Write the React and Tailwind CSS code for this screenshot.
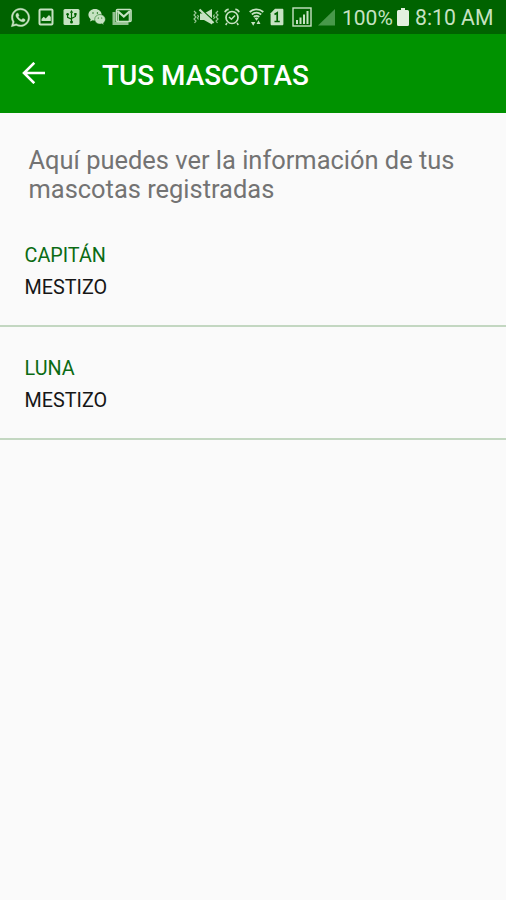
import React from "react";
import { FaWhatsapp } from "react-icons/fa";

function ImageIcon() {
  return (
    <svg className="ml-[7px] h-[18px] w-[16px]" viewBox="0 0 16 18" fill="none">
      <rect x="1.5" y="1.5" width="13" height="15" rx="1" stroke="currentColor" strokeWidth="2" />
      <path d="M3.5 13V11l2.2-2.2 2 1.7L11 7l1.8 2v4z" fill="currentColor" />
    </svg>
  );
}

function UsbIcon() {
  return (
    <svg className="ml-[9px] h-[18px] w-[17px]" viewBox="0 0 17 18" fill="none">
      <rect x="0.5" y="1" width="16" height="16" rx="1.5" fill="currentColor" />
      <g stroke="#006300" strokeWidth="1.2">
        <path d="M8.5 4.5V14M4.6 6.5v2.8l3.9 2M12.4 6.5v2l-3.9 2" />
      </g>
      <g fill="#006300">
        <path d="M8.5 2 6.8 4.8h3.4z" />
        <circle cx="4.6" cy="6.3" r="1.3" />
        <path d="M11.2 5h2.4v2.4h-2.4z" />
        <circle cx="8.5" cy="14" r="1.5" />
      </g>
    </svg>
  );
}

function ChatIcon() {
  return (
    <svg className="ml-[8px] h-[18px] w-[18px]" viewBox="0 0 18 18" fill="none">
      <path d="M7 1C3.200 1 .4 3.600.4 6.800c0 1.800 1 3.300 2.300 4.400L2 13.500l2.700-1.300c.7.200 1.500.3 2.300.3 3.800 0 6.700-2.600 6.700-5.700S10.800 1 7 1z" fill="currentColor" />
      <path d="M12 6.500c-3 0-5.300 2.200-5.300 4.800s2.300 4.800 5.300 4.800c.7 0 1.300-.1 1.900-.3l2.100 1.200-.6-2c1.300-.9 2-2.200 2-3.700 0-2.600-2.400-4.800-5.400-4.800z" fill="currentColor" stroke="#006300" strokeWidth=".5" />
      <g fill="#006300">
        <circle cx="5" cy="5" r=".7" />
        <circle cx="9.400" cy="5" r=".7" />
        <circle cx="10.300" cy="10" r=".6" />
        <circle cx="13.700" cy="10" r=".6" />
      </g>
    </svg>
  );
}

function MailIcon() {
  return (
    <svg className="ml-[6px] h-[18px] w-[20px]" viewBox="0 0 20 18" fill="none">
      <path d="M2 4v11.500h14.500" stroke="currentColor" strokeWidth="3" opacity=".75" />
      <rect x="4.500" y="1.500" width="14.500" height="12" rx="1" stroke="currentColor" strokeWidth="1.600" />
      <path d="m5.500 3 6.300 5.500L18 3" stroke="currentColor" strokeWidth="2.200" />
      <path d="M6.300 4v9M17.300 4v9" stroke="currentColor" strokeWidth="1.200" />
    </svg>
  );
}

function MuteIcon() {
  return (
    <svg className="h-[18px] w-[26px]" viewBox="0 0 26 18" fill="none">
      <path d="M7 5.500h4l8-4.500v15.500l-8-4.500H7z" fill="currentColor" />
      <path d="M9.500 2.500 20.500 12.500" stroke="#006300" strokeWidth="1.200" />
      <path d="M6.500 1.500 20.500 15" stroke="currentColor" strokeWidth="2.200" />
      <path d="m1 3 2 2-2 2 2 2-2 2 2 2-1.500 2M4.500 7l1 1.500-1 1.500 1 1.500M25 3l-2 2 2 2-2 2 2 2-2 2 1.500 2M21.500 6.500l-1 1.500 1 1.500-1 1.500" stroke="currentColor" strokeWidth="1.200" opacity=".8" />
    </svg>
  );
}

function AlarmIcon() {
  return (
    <svg className="ml-[5px] h-[18px] w-[16px]" viewBox="0 0 16 18" fill="none" stroke="currentColor">
      <circle cx="8" cy="9.500" r="6" strokeWidth="1.700" />
      <path d="m5 9 2.400 2.300L11 7.500M3 15l-1.300 2M13 15l1.300 2" strokeWidth="1.500" />
      <path d="M1 4.200C1.500 2.500 3 1.300 4.700 1.300M15 4.200c-.5-1.700-2-2.900-3.700-2.900" strokeWidth="1.800" />
    </svg>
  );
}

function WifiIcon() {
  return (
    <svg className="ml-[9px] h-[18px] w-[15px]" viewBox="0 0 15 18" fill="none">
      <path d="M.7 4c4-3.500 9.600-3.500 13.600 0M2.800 6.500c2.900-2.300 6.500-2.300 9.400 0M4.700 8.900c1.700-1.200 3.900-1.200 5.600 0" stroke="currentColor" strokeWidth="1.800" />
      <path d="m5.500 10 2 2.700 2-2.700q-2-1.100-4 0zM2 14h4.400l-2.200 3.700zM7.500 16 9.500 12.300l2 3.700z" fill="currentColor" />
    </svg>
  );
}

function SimIcon() {
  return (
    <svg className="ml-[6px] h-[18px] w-[14px]" viewBox="0 0 14 18" fill="none">
      <path d="M5 .7h7.200c.7 0 1.200.5 1.200 1.200v14c0 .8-.5 1.300-1.200 1.300H1.800c-.7 0-1.200-.5-1.200-1.300V5.200z" fill="currentColor" />
      <path d="m4.500 6.500 2.700-1.700v9M4.500 13.500h5.300" stroke="#006300" strokeWidth="1.700" />
    </svg>
  );
}

function SignalBoxIcon() {
  return (
    <svg className="ml-[8px] h-[20px] w-[20px]" viewBox="0 0 20 20" fill="none" stroke="currentColor">
      <rect x="1" y="1" width="18" height="18" strokeWidth="1.400" />
      <path d="M5 13v4M8.500 10.500V17M12 7.500V17M15.500 4v13" strokeWidth="2" />
    </svg>
  );
}

function StatusBar() {
  return (
    <div className="flex h-[34px] items-center bg-[#006300] pl-[10px] text-[#c6e2c2]">
      <FaWhatsapp className="h-[21px] w-[21px]" stroke="currentColor" strokeWidth="10" />
      <ImageIcon />
      <UsbIcon />
      <ChatIcon />
      <MailIcon />
      <div className="ml-[61px] flex items-center">
        <MuteIcon />
        <AlarmIcon />
        <WifiIcon />
        <SimIcon />
        <SignalBoxIcon />
        <svg className="ml-[6px] h-[18px] w-[17px] text-[#48994a]" viewBox="0 0 17 18">
          <path d="M17 1v16.500H0z" fill="currentColor" />
        </svg>
      </div>
      <span className="ml-[7px] w-[55px] whitespace-nowrap pt-[2px] text-[21px] leading-none">100%</span>
      <svg className="h-[18px] w-[12px] text-[#e3f1df]" viewBox="0 0 12 18">
        <path d="M4 0h4v2h2.500q1.500 0 1.500 1.500v13q0 1.500-1.500 1.500h-9Q0 18 0 16.500v-13Q0 2 1.500 2H4z" fill="currentColor" />
      </svg>
      <span className="ml-[6px] whitespace-nowrap pt-[2px] text-[21.2px] leading-none">8:10 AM</span>
    </div>
  );
}

function Header() {
  return (
    <header className="flex h-[79px] items-center bg-[#009200] pl-[22px] text-white">
      <svg className="mb-[1px] h-[22px] w-[24px]" viewBox="0 0 24 22" fill="none" stroke="currentColor" strokeWidth="2.600">
        <path d="M23 11H2M12.300.8 2 11l10.300 10.200" />
      </svg>
      <h1 className="ml-[56px] whitespace-nowrap pt-[4px] text-[27.9px] font-medium leading-none">TUS MASCOTAS</h1>
    </header>
  );
}

function PetRow({ name, breed }) {
  return (
    <li className="h-[113px] border-b-2 border-[#c3d7c1] pl-[24.5px] pt-[26px] text-[19.8px] leading-8">
      <p className="text-[#0b6b14]">{name}</p>
      <p className="text-[#161616]">{breed}</p>
    </li>
  );
}

export default function App() {
  return (
    <div className="min-h-[900px] w-[506px] overflow-hidden bg-[#fafafa] font-['Roboto',sans-serif]">
      <StatusBar />
      <Header />
      <p className="h-[101px] whitespace-nowrap pl-[28.5px] pt-[33px] text-[25.45px] leading-[29px] text-[#737373]">
        Aquí puedes ver la información de tus
        <br />
        mascotas registradas
      </p>
      <ul>
        <PetRow name="CAPITÁN" breed="MESTIZO" />
        <PetRow name="LUNA" breed="MESTIZO" />
      </ul>
    </div>
  );
}
